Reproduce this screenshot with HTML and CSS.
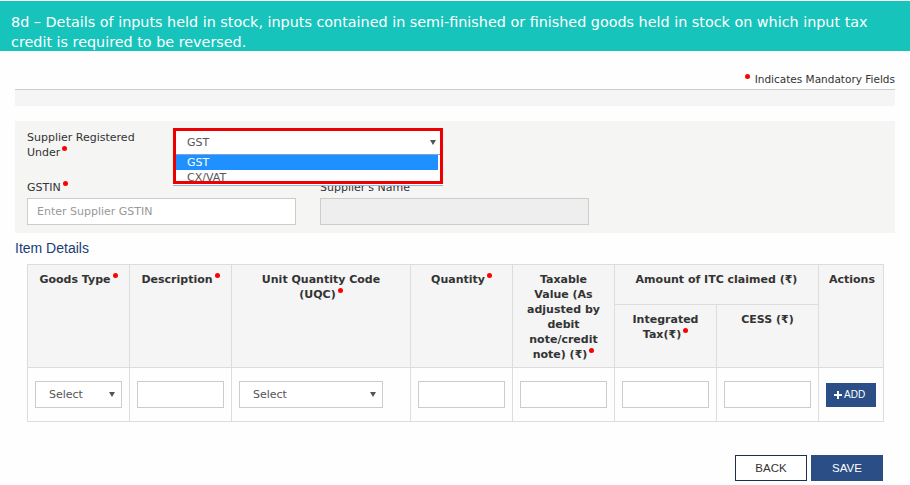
FILE: index.html
```html
<!DOCTYPE html>
<html>
<head>
    <meta charset="UTF-8">
    <title>GSTR-1 / ITC-03 - 8d</title>

    <link rel="stylesheet" href="styles.css">
</head>
<body>
    <header class="title">
        8d – Details of inputs held in stock, inputs contained in semi-finished or finished goods held in stock on which input tax credit is required to be reversed.
    </header>

    <main class="page">
        <p class="note"><span class="dot"></span> Indicates Mandatory Fields</p>
        <div class="strip"></div>

        <section class="panel">
            <div class="reg">
                <label class="lbl reg-lbl">Supplier Registered<br>Under<i class="req"></i></label>
                <div class="pick">
                    <div class="select main">
                        <span>GST</span>
                        <svg class="caret" width="6" height="5" viewBox="0 0 6 5"><polygon points="0,0 6,0 3,5"></polygon></svg>
                    </div>
                    <ul class="menu">
                        <li class="on">GST</li>
                        <li>CX/VAT</li>
                    </ul>
                    <div class="frame"></div>
                </div>
            </div>

            <div class="fields">
                <div class="field">
                    <label class="lbl">GSTIN<i class="req"></i></label>
                    <input class="box" type="text" placeholder="Enter Supplier GSTIN">
                </div>
                <div class="field">
                    <label class="lbl">Supplier's Name</label>
                    <input class="box" type="text" disabled>
                </div>
            </div>
        </section>

        <h3 class="sub">Item Details</h3>

        <table class="items">
            <colgroup>
                <col style="width:102px">
                <col style="width:102px">
                <col style="width:179px">
                <col style="width:102px">
                <col style="width:102px">
                <col style="width:102px">
                <col style="width:102px">
                <col style="width:65px">
            </colgroup>
            <thead>
                <tr class="r1">
                    <th rowspan="2">Goods Type<i class="req"></i></th>
                    <th rowspan="2">Description<i class="req"></i></th>
                    <th rowspan="2">Unit Quantity Code (UQC)<i class="req"></i></th>
                    <th rowspan="2">Quantity<i class="req"></i></th>
                    <th rowspan="2">Taxable Value (As adjusted by debit note/credit note) (₹)<i class="req"></i></th>
                    <th colspan="2">Amount of ITC claimed (₹)</th>
                    <th rowspan="2">Actions</th>
                </tr>
                <tr class="r2">
                    <th>Integrated Tax(₹)<i class="req"></i></th>
                    <th>CESS (₹)</th>
                </tr>
            </thead>
            <tbody>
                <tr>
                    <td>
                        <div class="select">
                            <span>Select</span>
                            <svg class="caret" width="6" height="5" viewBox="0 0 6 5"><polygon points="0,0 6,0 3,5"></polygon></svg>
                        </div>
                    </td>
                    <td><input class="box" type="text"></td>
                    <td>
                        <div class="select uqc">
                            <span>Select</span>
                            <svg class="caret" width="6" height="5" viewBox="0 0 6 5"><polygon points="0,0 6,0 3,5"></polygon></svg>
                        </div>
                    </td>
                    <td><input class="box" type="text"></td>
                    <td><input class="box" type="text"></td>
                    <td><input class="box" type="text"></td>
                    <td><input class="box" type="text"></td>
                    <td class="act">
                        <button class="add">
                            <svg width="8" height="8" viewBox="0 0 8 8"><path d="M3 0h2v3h3v2H5v3H3V5H0V3h3z"></path></svg>
                            ADD
                        </button>
                    </td>
                </tr>
            </tbody>
        </table>

        <div class="actions">
            <button class="btn back">BACK</button>
            <button class="btn save">SAVE</button>
        </div>
    </main>
</body>
</html>
```

FILE: styles.css
```css
body {
    margin: 0;
    background: #fdfefd;
    font-family: "DejaVu Sans", Verdana, sans-serif;
    color: #333;
}

.title {
    box-sizing: border-box;
    height: 50px;
    margin-top: 1px;
    padding: 11px 11px 0;
    overflow: hidden;

    background: #17c4bb;
    color: #fff;
    font-size: 14.35px;
    line-height: 20px;
}

.page {
    padding: 0 15px;
}

.note {
    margin: 0;
    padding-top: 21px;

    text-align: right;
    font-size: 10.5px;
    line-height: 14px;
}

.dot {
    display: inline-block;
    width: 5px;
    height: 5px;
    margin-right: 1px;
    vertical-align: 4px;

    border-radius: 50%;
    background: #f00;
}

.req {
    display: inline-block;
    width: 5px;
    height: 5px;
    margin-left: 2px;
    vertical-align: 5px;

    border-radius: 50%;
    background: #f00;
}

.strip {
    height: 16px;
    margin-top: 3px;

    border-top: 1px solid #ccc;
    background: #f5f5f5;
}

.panel {
    margin-top: 15px;
    padding: 7px 12px 8px;

    background: #f5f5f4;
}

.lbl {
    display: block;

    font-size: 11px;
    line-height: 15px;
    color: #333;
}

.reg {
    display: flex;
}

.reg-lbl {
    width: 149px;
    padding-top: 2px;
}

.pick {
    position: relative;
    width: 264px;
    margin-top: 3px;
}

.select {
    box-sizing: border-box;
    display: flex;
    align-items: center;
    justify-content: space-between;
    height: 27px;
    padding: 0 6px 0 13px;

    border: 1px solid #ccc;
    background: #fff;
    color: #555;
    font-size: 11px;
}

.select.main {
    height: 23px;
    padding: 0 4px 0 11px;
    border: 0;
}

.select.uqc {
    width: 144px;
}

.caret {
    fill: #555;
}

.menu {
    position: absolute;
    top: 23px;
    left: -3px;
    right: -3px;
    z-index: 2;

    margin: 0;
    padding: 0 0 0 3px;
    list-style: none;

    border-top: 1px solid #7fa3d9;
    border-bottom: 1px solid #9db4d8;
    background: #fff;
}

.menu li {
    height: 15px;
    padding-left: 11px;

    font-size: 11px;
    line-height: 15px;
    color: #555;
}

.menu li.on {
    margin-right: 5px;
    background: #1e90ff;
    color: #fff;
}

.frame {
    position: absolute;
    top: -3px;
    left: -3px;
    z-index: 3;

    width: 264px;
    height: 50px;

    border: 3px solid #ee0000;
    pointer-events: none;
}

.fields {
    display: flex;
    gap: 24px;
    margin-top: 20px;
}

.field {
    width: 269px;
}

.field .lbl {
    margin-bottom: 3px;
}

.box {
    box-sizing: border-box;
    display: block;
    width: 100%;
    height: 27px;
    margin: 0;
    padding: 0 9px;

    border: 1px solid #ccc;
    background: #fff;
    font-family: "DejaVu Sans", Verdana, sans-serif;
    font-size: 11px;
    color: #555;
}

.box::placeholder {
    color: #999;
}

.box:disabled {
    background: #eee;
}

.sub {
    margin: 5px 0 6px;

    font-family: "Liberation Sans", Arial, sans-serif;
    font-size: 14px;
    font-weight: normal;
    line-height: 20px;
    color: #1c3c78;
}

.items {
    width: 856px;
    margin: 0 12px;
    table-layout: fixed;
    border-collapse: collapse;
}

.items th,
.items td {
    border: 1px solid #ddd;
}

.items th {
    padding: 7px 10px 0;
    vertical-align: top;

    background: #f4f5f4;
    font-size: 11px;
    font-weight: bold;
    line-height: 15px;
    color: #333;
}

.items .r1 {
    height: 40px;
}

.items .r2 {
    height: 63px;
}

.items td {
    height: 53px;
    padding: 0 7px;
    vertical-align: middle;
}

.items td.act {
    text-align: center;
}

.add {
    display: inline-flex;
    align-items: center;
    gap: 2px;
    height: 24px;
    width: 50px;
    padding: 0 0 0 8px;

    border: 0;
    background: #2c4e86;
    color: #fff;
    font-family: "Liberation Sans", Arial, sans-serif;
    font-size: 10px;
    cursor: pointer;
}

.add svg {
    fill: #fff;
}

.actions {
    display: flex;
    justify-content: flex-end;
    gap: 4px;
    margin: 33px 12px 0;
}

.btn {
    box-sizing: border-box;
    width: 72px;
    height: 26px;

    font-family: "Liberation Sans", Arial, sans-serif;
    font-size: 11.5px;
    cursor: pointer;
}

.back {
    border: 1px solid #1f2f4d;
    background: #fff;
    color: #333;
}

.save {
    border: 1px solid #2c4e86;
    background: #2c4e86;
    color: #fff;
}
```
